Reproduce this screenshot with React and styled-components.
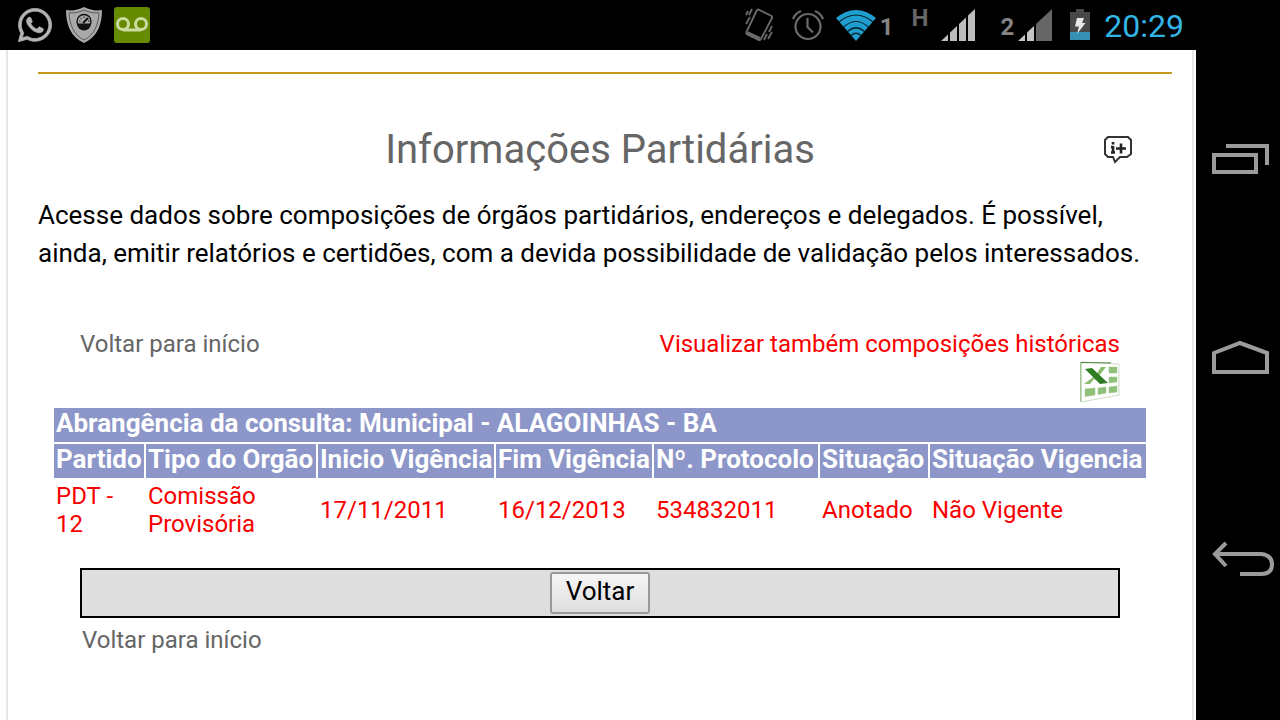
import React from 'react';
import styled, { createGlobalStyle } from 'styled-components';
import { FaWhatsapp } from 'react-icons/fa';

const rows = [
    {
        partido: 'PDT - 12',
        tipo: 'Comissão Provisória',
        inicio: '17/11/2011',
        fim: '16/12/2013',
        protocolo: '534832011',
        situacao: 'Anotado',
        vigencia: 'Não Vigente',
    },
]

const columns = [
    { key: 'partido', title: 'Partido', width: 92 },
    { key: 'tipo', title: 'Tipo do Orgão', width: 172 },
    { key: 'inicio', title: 'Inicio Vigência', width: 178 },
    { key: 'fim', title: 'Fim Vigência', width: 158 },
    { key: 'protocolo', title: 'Nº. Protocolo', width: 166 },
    { key: 'situacao', title: 'Situação', width: 110 },
    { key: 'vigencia', title: 'Situação Vigencia' },
]

const ShieldIcon = () => (
    <svg width="36" height="36" viewBox="0 0 36 36">
        <path d="M18 0 C12 3 6 4 0 3 C0 18 5 30 18 36 C31 30 36 18 36 3 C30 4 24 3 18 0Z" fill="#a9a9a9" />
        <path d="M18 3 C13 5.5 8 6.2 3 5.8 C3.5 18 8 28 18 33 C28 28 32.5 18 33 5.8 C28 6.2 23 5.5 18 3Z" fill="none" stroke="#444" strokeWidth="0.8" />
        <circle cx="18" cy="14.5" r="7" fill="#aaa" stroke="#111" strokeWidth="1.4" />
        <path d="M11 16.5 H25 A7 7 0 0 1 11 16.5Z" fill="#111" />
        <path d="M17 16 L22 11" stroke="#111" strokeWidth="2" />
        <path d="M13 14 h1.5 M14.5 11 l1 1 M18 9.5 v1.5 M22 14 h1.5" stroke="#111" strokeWidth="1" />
    </svg>
)

const VoicemailIcon = () => (
    <svg width="36" height="36" viewBox="0 0 36 36">
        <rect width="36" height="36" rx="3" fill="#668a00" />
        <g fill="none" stroke="#ccdca0" strokeWidth="3">
            <circle cx="9" cy="17" r="5.5" />
            <circle cx="27" cy="17" r="5.5" />
            <path d="M9 23 H27" />
        </g>
    </svg>
)

const VibrateIcon = () => (
    <svg width="30" height="34" viewBox="0 0 30 34" fill="none" stroke="#6b6b6b">
        <path d="M14.5 1.5 L27.5 8 Q28.5 8.8 28 10 L17 31 Q16 32.5 14.5 32 L3 26 Q2 25 2.5 24 L12.5 3 Q13.2 1.5 14.5 1.5Z" strokeWidth="1.8" />
        <path d="M3 25 L16 31" strokeWidth="4" />
        <path d="M8 1 L5 7 M4 3 L2 7 M6 9 L2 16 M28 18 L25 24 M28 24 L24 31 M23 26 L20 32" strokeWidth="1.8" />
    </svg>
)

const AlarmIcon = () => (
    <svg width="32" height="32" viewBox="0 0 32 32" fill="none" stroke="#6b6b6b" strokeWidth="2.2">
        <circle cx="16" cy="17.5" r="12.5" />
        <path d="M15.5 9 V18 L21 23.5" />
        <path d="M1 10 Q3 4.5 9 2 M23 2 Q29 4.5 31 10" />
    </svg>
)

const WifiIcon = () => (
    <svg width="40" height="32" viewBox="0 0 40 32">
        <path d="M0 9 Q20 -7 40 9 L20 32Z" fill="#1f9fd0" />
        <g fill="none" stroke="#06232e" strokeWidth="1.2">
            <path d="M3 13 Q20 -1 37 13" />
            <path d="M7.5 18 Q20 7 32.5 18" />
            <path d="M11.5 22.5 Q20 15 28.5 22.5" />
            <path d="M15 26.5 Q20 22 25 26.5" />
        </g>
    </svg>
)

const SignalIcon = ({ weak }) => (
    <svg width="34" height="32" viewBox="0 0 34 32">
        {weak
            ? <>
                <path d="M0 32 L7 25.5 V32Z M9 23.5 L16 17 V32 H9Z" fill="#c4c4c4" />
                <path d="M18 15 L34 0 V32 H18Z" fill="#666" />
            </>
            : <path d="M0 32 L7 25.5 V32Z M9 23.5 L16 17 V32 H9Z M18 15 L25 8.5 V32 H18Z M27 6.5 L34 0 V32 H27Z" fill="#bcbebe" />}
    </svg>
)

const BatteryIcon = () => (
    <svg width="20" height="32" viewBox="0 0 20 32">
        <path d="M6 0 H14 V3 H20 V23 H0 V3 H6Z" fill="#484848" />
        <rect y="23" width="20" height="8" fill="#358fb2" />
        <path d="M7 9 H14 L12 14 H15.5 L7 25 L9 17.5 H5Z" fill="#e8e8e8" />
    </svg>
)

const RecentsIcon = () => (
    <svg width="62" height="36" viewBox="0 0 62 36" fill="none" stroke="#9b9b9b" strokeWidth="4">
        <rect x="2" y="13" width="42" height="17" />
        <path d="M14 4 H55 V23" />
    </svg>
)

const HomeIcon = () => (
    <svg width="62" height="36" viewBox="0 0 62 36" fill="none" stroke="#9b9b9b" strokeWidth="4">
        <path d="M2 11 L28 1 L55 11 V30 H2Z" />
    </svg>
)

const BackIcon = () => (
    <svg width="62" height="36" viewBox="0 0 62 36" fill="none" stroke="#9b9b9b" strokeWidth="4">
        <path d="M14 1 L3 12 L14 24" />
        <path d="M3 12 H49 Q60 13 60 22.5 Q60 32 49 32 H28" />
    </svg>
)

const InfoIcon = () => (
    <svg width="28" height="28" viewBox="0 0 28 28">
        <path d="M4 1 H24 L27 4 V18 L23 21 H16 L11 26 L9 21 H4 L1 18 V4Z" fill="#fff" stroke="#333" strokeWidth="2" />
        <path d="M9 6 V8.5 M9 10 V17 M7 11 H9 M7 16.500 H11 M12 12.5 H22 M17 7.5 V17.5" fill="none" stroke="#222" strokeWidth="2.6" />
    </svg>
)

const SheetIcon = () => (
    <svg width="40" height="40" viewBox="0 0 40 40">
        <path d="M1 0 L39 2 V33 L1 40Z" fill="#fff" stroke="#c3d3ba" strokeWidth="0.8" />
        <path d="M0 0 H1.5 V39 L0 40Z" fill="#a5c795" />
        <path d="M1 0.5 L31 1" stroke="#4d7a3c" strokeWidth="1" />
        <g fill="#8fc077" stroke="#9fc48f" strokeWidth="0.5">
            <path d="M29 5 H37 V11 H29Z M29 15 H37 V20 L29 21Z M29 25 L37 24 V30 L29 31Z M18 26 L26 25 V31 L18 32.5Z M5 27 L15 26 V33 L5 34.5Z" />
        </g>
        <path d="M16 13 L21 5 H26 L19 14 L26 20 H21 L14 17 L10 22 H4Z" fill="#8cbd6c" />
        <path d="M5 7 L12 6 L28 21 L20 22Z" fill="#2f7d22" />
    </svg>
)

const App = () => {
    return(<Screen>
        <GlobalStyle />
        <StatusBar>
            <StatusGroup $gap={12}>
                <FaWhatsapp size={38} color='#b4b4b4' stroke='#b4b4b4' strokeWidth={10} />
                <ShieldIcon />
                <VoicemailIcon />
            </StatusGroup>
            <StatusGroup $gap={26}>
                <StatusGroup $gap={18}>
                    <VibrateIcon />
                    <StatusGroup $gap={12}>
                        <AlarmIcon />
                        <StatusGroup $gap={4}>
                            <WifiIcon />
                            <SimLabel>1</SimLabel>
                        </StatusGroup>
                    </StatusGroup>
                    <StatusGroup $gap={12}>
                        <NetworkLabel>H</NetworkLabel>
                        <SignalIcon />
                    </StatusGroup>
                </StatusGroup>
                <StatusGroup $gap={18}>
                    <StatusGroup $gap={4}>
                        <SimLabel>2</SimLabel>
                        <SignalIcon weak />
                    </StatusGroup>
                    <StatusGroup $gap={14}>
                        <BatteryIcon />
                        <Clock>20:29</Clock>
                    </StatusGroup>
                </StatusGroup>
            </StatusGroup>
        </StatusBar>
        <Body>
            <Page>
                <Rule />
                <TitleRow>
                    <Title>Informações Partidárias</Title>
                    <IconLink href='#info' aria-label='Mais informações'><InfoIcon /></IconLink>
                </TitleRow>
                <Intro>
                    Acesse dados sobre composições de órgãos partidários, endereços e delegados. É possível, ainda, emitir relatórios e certidões, com a devida possibilidade de validação pelos interessados.
                </Intro>
                <LinkRow>
                    <TextLink href='#inicio'>Voltar para início</TextLink>
                    <TextLink href='#historicas' $red>Visualizar também composições históricas</TextLink>
                </LinkRow>
                <ExportRow>
                    <IconLink href='#excel' aria-label='Exportar para Excel'><SheetIcon /></IconLink>
                </ExportRow>
                <Table>
                    <colgroup>
                        {columns.map(col => <Col key={col.key} $width={col.width} />)}
                    </colgroup>
                    <thead>
                        <tr>
                            <HeadCell colSpan={columns.length}>Abrangência da consulta: Municipal - ALAGOINHAS - BA</HeadCell>
                        </tr>
                        <tr>
                            {columns.map(col => <HeadCell key={col.key} scope='col'>{col.title}</HeadCell>)}
                        </tr>
                    </thead>
                    <tbody>
                        {rows.map(row => (
                            <tr key={row.protocolo}>
                                {columns.map(col => <Cell key={col.key}>{row[col.key]}</Cell>)}
                            </tr>
                        ))}
                    </tbody>
                </Table>
                <ButtonBar>
                    <Button type='button'>Voltar</Button>
                </ButtonBar>
                <FooterRow>
                    <TextLink href='#inicio'>Voltar para início</TextLink>
                </FooterRow>
            </Page>
            <NavBar>
                <NavButton type='button' aria-label='Recentes'><RecentsIcon /></NavButton>
                <NavButton type='button' aria-label='Início'><HomeIcon /></NavButton>
                <NavButton type='button' aria-label='Voltar'><BackIcon /></NavButton>
            </NavBar>
        </Body>
    </Screen>);
}

export default App;

const GlobalStyle = createGlobalStyle`
    * {
        box-sizing: border-box;
    }
    body {
        margin: 0;
        background: #000;
        font-family: Roboto, sans-serif;
    }
    svg {
        display: block;
        flex-shrink: 0;
        overflow: visible;
    }
`

const Screen = styled.div`
    display: flex;
    flex-direction: column;
    min-height: 100vh;
`

const StatusBar = styled.header`
    display: flex;
    justify-content: space-between;
    align-items: center;
    height: 50px;
    padding: 0 96px 0 16px;
    background: #000;
`

const StatusGroup = styled.div`
    display: flex;
    align-items: center;
    gap: ${props => props.$gap}px;
`

const SimLabel = styled.span`
    padding-top: 4px;
    color: #858585;
    font-size: 24px;
    font-weight: 700;
    line-height: 28px;
`

const NetworkLabel = styled.span`
    padding-bottom: 14px;
    color: #666;
    font-size: 24px;
    font-weight: 700;
    line-height: 24px;
`

const Clock = styled.time`
    padding-top: 2px;
    color: #33b5e5;
    font-size: 32px;
    line-height: 40px;
`

const Body = styled.div`
    display: flex;
    flex: 1;
    background: #fff;
`

const Page = styled.main`
    flex: 1;
    min-width: 0;
    margin: 0 2px 0 6px;
    padding: 22px 20px 60px 30px;
    border: solid #e6e6e6;
    border-width: 0 2px;
`

const Rule = styled.hr`
    height: 2px;
    margin: 0;
    border: 0;
    background: #c49a1a;
`

const TitleRow = styled.div`
    display: grid;
    grid-template-columns: 1fr auto 1fr;
    align-items: center;
    margin-top: 50px;
    padding: 0 40px 0 30px;
`

const Title = styled.h1`
    grid-column: 2;
    margin: 0;
    color: #666;
    font-size: 40px;
    font-weight: 400;
    line-height: 52px;
`

const IconLink = styled.a`
    justify-self: end;
    display: block;
`

const Intro = styled.p`
    margin: 20px 0 0;
    color: #000;
    font-size: 26px;
    line-height: 38px;
`

const LinkRow = styled.div`
    display: flex;
    justify-content: space-between;
    margin-top: 58px;
    padding: 0 52px 0 42px;
`

const TextLink = styled.a`
    color: ${props => props.$red ? '#f80000' : '#666'};
    font-size: 24px;
    line-height: 28px;
    text-decoration: none;
`

const ExportRow = styled.div`
    display: flex;
    justify-content: flex-end;
    margin-top: 4px;
    padding: 0 52px 0 42px;
`

const Table = styled.table`
    width: calc(100% - 38px);
    margin: 4px 0 0 14px;
    border-spacing: 2px;
    table-layout: fixed;
`

const Col = styled.col`
    width: ${props => props.$width ? `${props.$width - 2}px` : 'auto'};
`

const HeadCell = styled.th`
    padding: 0 2px 4px;
    background: #8c96c8;
    color: #fff;
    font-size: 26px;
    font-weight: 700;
    line-height: 30px;
    text-align: left;
    white-space: nowrap;
`

const Cell = styled.td`
    padding: 2px;
    color: #f80000;
    font-size: 24px;
    line-height: 28px;
`

const ButtonBar = styled.div`
    display: flex;
    justify-content: center;
    margin: 26px 52px 0 42px;
    padding: 2px;
    border: 2px solid #000;
    background: #dedede;
`

const Button = styled.button`
    height: 42px;
    padding: 0 14px 4px;
    border: 2px solid #999;
    border-radius: 3px;
    background: linear-gradient(#f6f6f6, #dedede);
    color: #000;
    font-family: inherit;
    font-size: 26px;
    line-height: 32px;
`

const FooterRow = styled.div`
    margin-top: 8px;
    padding-left: 44px;
`

const NavBar = styled.nav`
    display: flex;
    flex-direction: column;
    justify-content: space-between;
    width: 84px;
    padding: 92px 0 142px 16px;
    background: #000;
`

const NavButton = styled.button`
    padding: 0;
    border: 0;
    background: none;
`
